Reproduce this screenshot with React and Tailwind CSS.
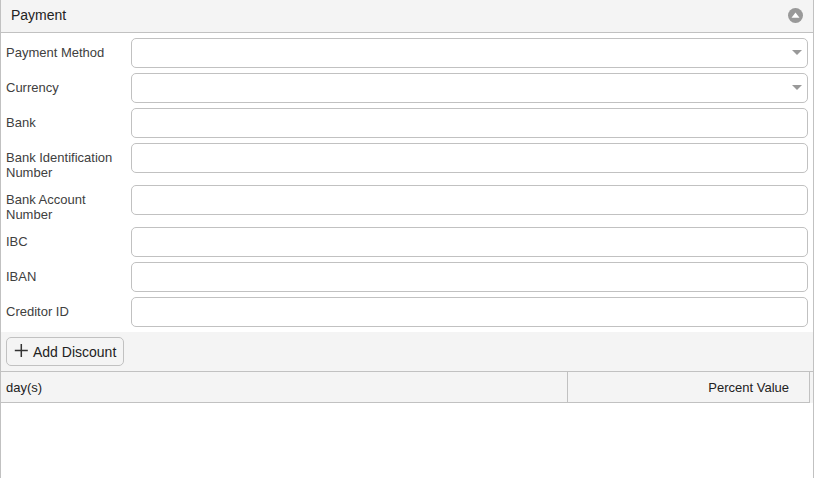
const fields = [
  { label: 'Payment Method', select: true },
  { label: 'Currency', select: true },
  { label: 'Bank' },
  { label: 'Bank Identification Number' },
  { label: 'Bank Account Number' },
  { label: 'IBC' },
  { label: 'IBAN' },
  { label: 'Creditor ID' },
];

function Field({ label, select }) {
  return (
    <div className="flex items-start">
      <div className="w-[125px] shrink-0 pt-[7px] pr-3 text-[13px] leading-[15px] text-[#404040]">{label}</div>
      <div className="flex h-[30px] flex-1 items-center justify-end rounded-[5px] border border-[#c1c1c1] bg-white pr-[5px]">
        {select && (
          <svg width="10" height="5" viewBox="0 0 10 5" className="mb-[1px] block">
            <path d="M0 0H10L5 5Z" fill="#999" />
          </svg>
        )}
      </div>
    </div>
  );
}

export default function App() {
  return (
    <div className="flex h-[478px] w-[814px] flex-col overflow-hidden border-x border-[#c1c1c1] bg-white font-['Liberation_Sans',Arial,sans-serif] text-[#222]">
      <div className="flex h-[33px] shrink-0 items-center justify-between border-b border-[#c1c1c1] bg-[#f4f4f4] pr-[10px] pb-[2px] pl-[10px]">
        <span className="text-[14px] leading-4">Payment</span>
        <svg width="15" height="15" viewBox="0 0 15 15" className="block">
          <circle cx="7.5" cy="7.5" r="7.5" fill="#999" />
          <path d="M3.5 9.7L7.5 4.4L11.5 9.7Z" fill="#fff" />
        </svg>
      </div>
      <div className="flex flex-col gap-[5px] px-[5px] py-[5px]">
        {fields.map((f) => (
          <Field key={f.label} {...f} />
        ))}
      </div>
      <div className="flex h-[40px] shrink-0 items-start border-b border-[#c1c1c1] bg-[#f4f4f4] px-[5px] pt-[5px]">
        <button className="flex h-[29px] w-[118px] items-center rounded-[5px] border border-[#c1c1c1] pl-[7px] text-[14px] leading-4 whitespace-nowrap">
          <svg width="14" height="13" viewBox="0 0 14 13" className="mr-[5px] mb-[2px] block shrink-0">
            <path d="M7.3 0V13M0.8 6.5H13.8" stroke="#333" strokeWidth="1.5" />
          </svg>
          Add Discount
        </button>
      </div>
      <div className="flex h-[31px] shrink-0 bg-[#f4f4f4] text-[13px] leading-[15px]">
        <div className="flex w-[567px] items-center border-r border-b border-[#c1c1c1] pl-[5px]">day(s)</div>
        <div className="flex w-[242px] items-center justify-end border-r border-b border-[#c1c1c1] pr-[20px]">Percent Value</div>
      </div>
    </div>
  );
}
